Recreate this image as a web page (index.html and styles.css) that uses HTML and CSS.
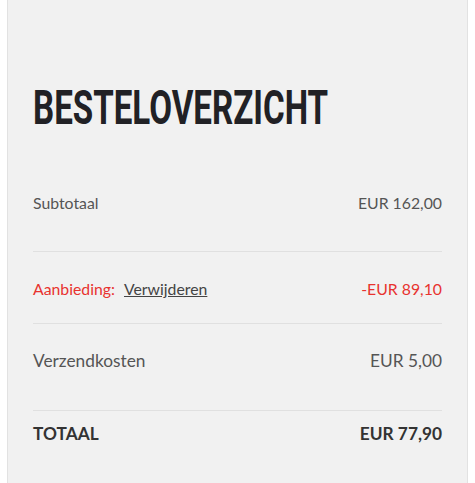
FILE: index.html
```html
<!DOCTYPE html>
<html lang="nl">
<head>
  <meta charset="UTF-8" />
  <meta name="viewport" content="width=device-width, initial-scale=1" />
  <title>Besteloverzicht</title>
  <link rel="stylesheet" href="styles.css">
</head>
<body>
  <div class="summary">
    <h1 class="summary-title">BESTELOVERZICHT</h1>
    <div class="summary-rows">
      <div class="row row-subtotal">
        <span>Subtotaal</span>
        <span>EUR 162,00</span>
      </div>
      <div class="row row-discount">
        <span>Aanbieding: <a href="#">Verwijderen</a></span>
        <span>-EUR 89,10</span>
      </div>
      <div class="row row-shipping">
        <span>Verzendkosten</span>
        <span>EUR 5,00</span>
      </div>
      <div class="row row-total">
        <span>TOTAAL</span>
        <span>EUR 77,90</span>
      </div>
    </div>
  </div>
</body>
</html>
```

FILE: styles.css
```css
* {
  margin: 0; padding: 0; box-sizing: border-box;
}
body {
  background: #fff;
  font-family: Lato, 'Liberation Sans', sans-serif;
  color: #555;
}
.summary {
  width: 461px;
  min-height: 500px;
  margin-left: 7px;
  padding: 83px 25px 0;
  background: #f1f1f1;
  border-left: 1px solid #e2e2e2;
  border-right: 1px solid #e2e2e2;
}
.summary-title {
  font-family: Roboto, sans-serif;
  font-weight: 700;
  font-size: 49px;
  line-height: 49px;
  height: 49px;
  color: #212125;
  transform: scaleX(0.676);
  transform-origin: left center;
  white-space: nowrap;
}
.summary-rows {
  margin-top: 34px;
}
.row {
  display: flex;
  justify-content: space-between;
  align-items: center;
  font-size: 15.8px;
  line-height: 20px;
  border-bottom: 1px solid #e0e0e0;
}
.row-subtotal {
  padding: 27px 0 38px;
}
.row-discount {
  padding: 27px 0 24px;
  color: #e8332f;
}
.row-discount a {
  color: #444;
  margin-left: 5px;
  text-decoration: underline;
}
.row-shipping {
  padding: 27px 0 39px;
  font-size: 17.3px;
}
.row-total {
  padding: 13px 0;
  border-bottom: none;
  font-size: 17.3px;
  font-weight: 700;
  color: #333;
}
```
